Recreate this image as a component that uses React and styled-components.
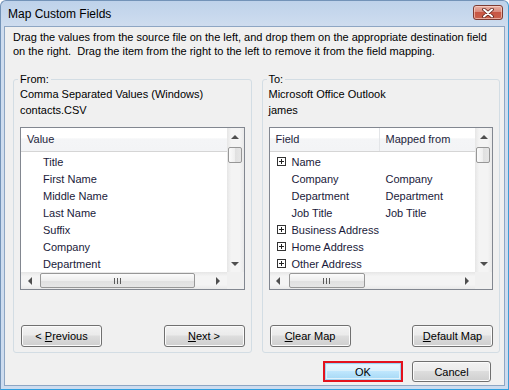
import React from 'react'
import styled, { createGlobalStyle } from 'styled-components'

const GlobalStyle = createGlobalStyle`
  html, body {
    margin: 0;
    padding: 0;
    background: #ffffff;
  }
  body {
    font-family: "Liberation Sans", Arial, sans-serif;
    font-size: 11px;
    color: #000;
  }
  * {
    box-sizing: border-box;
  }
`

const Window = styled.div`
  width: 509px;
  height: 390px;
  display: flex;
  flex-direction: column;
  background: linear-gradient(#bed2ea, #cfddef 26px, #cddcef);
  border: 1px solid #7393b8;
  border-right-color: #3f9bd4;
  border-bottom-color: #2f9fe0;
  border-radius: 6px 6px 0 0;
`

const TitleBar = styled.div`
  height: 25px;
  display: flex;
  align-items: flex-start;
  justify-content: space-between;
  padding: 0 5px 0 7px;
`

const Title = styled.div`
  font-size: 12px;
  line-height: 16px;
  padding-top: 5px;
  color: #000;
`

const CloseButton = styled.div`
  width: 30px;
  height: 15px;
  margin-top: 4px;
  border: 1px solid #7d3b33;
  border-radius: 3px;
  background: linear-gradient(#eab1a5, #d98a7c 45%, #c85644 50%, #c9614d);
  box-shadow: inset 0 0 0 1px rgba(255, 220, 210, 0.6);
  display: flex;
  align-items: center;
  justify-content: center;
`

const Client = styled.div`
  flex: 1;
  margin: 0 3px 3px;
  border: 1px solid #8ea6c3;
  background: #f0f0f0;
  padding: 3px 4px 3px 8px;
  display: flex;
  flex-direction: column;
`

const Instructions = styled.p`
  margin: 0;
  line-height: 14px;
  color: #000;
`

const Groups = styled.div`
  display: flex;
  gap: 10px;
  margin-top: 14px;
`

const Group = styled.fieldset`
  flex: 1;
  min-width: 0;
  margin: 0;
  padding: 0 6px 5px;
  border: 1px solid #d3dde4;
  border-radius: 3px;
`

const Legend = styled.legend`
  padding: 0 2px;
  margin-left: -2px;
  line-height: 14px;
  color: #000;
`

const InfoLine = styled.div`
  line-height: 16px;
  color: #000;
`

const ListBox = styled.div`
  margin-top: 9px;
  height: 163px;
  border: 1px solid #828790;
  background: #fff;
  display: grid;
  grid-template-columns: 1fr 17px;
  grid-template-rows: 1fr 17px;
`

const ListArea = styled.div`
  overflow: hidden;
  display: flex;
  flex-direction: column;
`

const Header = styled.div`
  height: 24px;
  flex: none;
  display: flex;
  background: linear-gradient(#ffffff, #ffffff 45%, #f4f5f7 46%, #f3f4f6);
  border-bottom: 1px solid #d5d5d5;
`

const HeaderCell = styled.div`
  width: ${p => p.$w || 'auto'};
  flex: ${p => (p.$w ? 'none' : '1')};
  padding-left: 6px;
  line-height: 23px;
  color: #1e1e3c;
  border-right: ${p => (p.$divider ? '1px solid #e3e5e8' : 'none')};
`

const Rows = styled.div`
  padding-top: 1px;
`

const Row = styled.div`
  height: 17px;
  display: flex;
  align-items: center;
  color: #1a1a3a;
`

const Cell = styled.div`
  width: ${p => p.$w || 'auto'};
  flex: ${p => (p.$w ? 'none' : '1')};
  padding-left: ${p => p.$pad || 0}px;
  display: flex;
  align-items: center;
  white-space: nowrap;
`

const Expander = styled.svg`
  width: 9px;
  height: 9px;
  margin-right: 6px;
  flex: none;
`

const VScroll = styled.div`
  grid-row: 1;
  grid-column: 2;
  display: flex;
  flex-direction: column;
  background: linear-gradient(90deg, #e6e6e6, #f4f4f4 25%, #f4f4f4 75%, #e9e9e9);
`

const HScroll = styled.div`
  grid-row: 2;
  grid-column: 1;
  display: flex;
  align-items: center;
  background: linear-gradient(#e6e6e6, #f4f4f4 25%, #f4f4f4 75%, #e9e9e9);
`

const Corner = styled.div`
  grid-row: 2;
  grid-column: 2;
  background: #f0f0f0;
`

const ArrowBox = styled.div`
  width: 17px;
  height: 17px;
  flex: none;
  display: flex;
  align-items: center;
  justify-content: center;
  margin-top: ${p => (p.$end ? 'auto' : '0')};
  margin-left: ${p => (p.$endX ? 'auto' : '0')};
`

const Triangle = styled.span`
  width: 0;
  height: 0;
  ${p =>
    p.$dir === 'up'
      ? 'border-left: 4px solid transparent; border-right: 4px solid transparent; border-bottom: 4px solid #4f4f4f;'
      : p.$dir === 'down'
      ? 'border-left: 4px solid transparent; border-right: 4px solid transparent; border-top: 4px solid #4f4f4f;'
      : p.$dir === 'left'
      ? 'border-top: 4px solid transparent; border-bottom: 4px solid transparent; border-right: 4px solid #4f4f4f;'
      : 'border-top: 4px solid transparent; border-bottom: 4px solid transparent; border-left: 4px solid #4f4f4f;'}
`

const VThumb = styled.div`
  height: 16px;
  margin: 2px 2px 0 1px;
  border: 1px solid #979797;
  border-radius: 2px;
  background: linear-gradient(90deg, #fbfbfb, #eeeeee 50%, #e0e0e0 51%, #e6e6e6);
`

const HThumb = styled.div`
  width: ${p => p.$w}px;
  height: 15px;
  margin-left: 2px;
  flex: none;
  border: 1px solid #979797;
  border-radius: 2px;
  background: linear-gradient(#fbfbfb, #eeeeee 50%, #e0e0e0 51%, #e6e6e6);
  display: flex;
  align-items: center;
  justify-content: center;
`

const ButtonRow = styled.div`
  margin-top: 35px;
  display: flex;
  justify-content: space-between;
  padding: 0 0 0 1px;
`

const Button = styled.button`
  width: ${p => p.$w || 81}px;
  height: ${p => p.$h || 22}px;
  padding: 0;
  font: inherit;
  font-size: 11px;
  color: #000;
  border: 1px solid #707070;
  border-radius: 3px;
  background: linear-gradient(#f2f2f2, #ebebeb 45%, #dddddd 50%, #cfcfcf);
  box-shadow: inset 0 0 0 1px #fbfbfb;
`

const Footer = styled.div`
  margin-top: 8px;
  display: flex;
  justify-content: flex-end;
  gap: 9px;
  padding-right: 9px;
`

const Highlight = styled.div`
  width: 80px;
  height: 21px;
  border: 2px solid #e3121d;
  display: flex;
`

const DefaultButton = styled.button`
  flex: 1;
  padding: 0;
  font: inherit;
  font-size: 11px;
  color: #000;
  border: 1px solid #9ed3f1;
  background: linear-gradient(#eaf6fd, #d9f0fc 45%, #bee6fd 50%, #a7d9f5);
  box-shadow: inset 0 0 0 1px #dff2fc;
`

const Grip = () => (
  <svg width="7" height="6" viewBox="0 0 7 6">
    <path d="M0.5 0v6M3.5 0v6M6.5 0v6" stroke="#5a5a5a" strokeWidth="1" />
  </svg>
)

const Plus = () => (
  <Expander viewBox="0 0 9 9">
    <rect x="0.5" y="0.5" width="8" height="8" fill="#fff" stroke="#333" />
    <path d="M2 4.5h5M4.5 2v5" stroke="#222" strokeWidth="1" />
  </Expander>
)

function Scrollbars({ thumb }) {
  return (
    <>
      <VScroll>
        <ArrowBox>
          <Triangle $dir="up" />
        </ArrowBox>
        <VThumb />
        <ArrowBox $end>
          <Triangle $dir="down" />
        </ArrowBox>
      </VScroll>
      <HScroll>
        <ArrowBox>
          <Triangle $dir="left" />
        </ArrowBox>
        <HThumb $w={thumb}>
          <Grip />
        </HThumb>
        <ArrowBox $endX>
          <Triangle $dir="right" />
        </ArrowBox>
      </HScroll>
      <Corner />
    </>
  )
}

const sourceFields = [
  'Title',
  'First Name',
  'Middle Name',
  'Last Name',
  'Suffix',
  'Company',
  'Department',
]

const targetFields = [
  { name: 'Name', group: true },
  { name: 'Company', from: 'Company' },
  { name: 'Department', from: 'Department' },
  { name: 'Job Title', from: 'Job Title' },
  { name: 'Business Address', group: true },
  { name: 'Home Address', group: true },
  { name: 'Other Address', group: true },
]

export default function App() {
  return (
    <>
      <GlobalStyle />
      <Window>
        <TitleBar>
          <Title>Map Custom Fields</Title>
          <CloseButton>
            <svg width="12" height="10" viewBox="0 0 12 10">
              <path d="M2 1.5l8 7M10 1.5l-8 7" stroke="#5b1e18" strokeWidth="3.6" strokeLinecap="round" />
              <path d="M2 1.5l8 7M10 1.5l-8 7" stroke="#ffffff" strokeWidth="2" strokeLinecap="round" />
            </svg>
          </CloseButton>
        </TitleBar>
        <Client>
          <Instructions>
            Drag the values from the source file on the left, and drop them on the appropriate destination field
            <br />
            on the right.&nbsp; Drag the item from the right to the left to remove it from the field mapping.
          </Instructions>
          <Groups>
            <Group>
              <Legend>From:</Legend>
              <InfoLine>Comma Separated Values (Windows)</InfoLine>
              <InfoLine>contacts.CSV</InfoLine>
              <ListBox>
                <ListArea>
                  <Header>
                    <HeaderCell>Value</HeaderCell>
                  </Header>
                  <Rows>
                    {sourceFields.map(f => (
                      <Row key={f}>
                        <Cell $pad={22}>{f}</Cell>
                      </Row>
                    ))}
                  </Rows>
                </ListArea>
                <Scrollbars thumb={155} />
              </ListBox>
              <ButtonRow>
                <Button>
                  &lt; <u>P</u>revious
                </Button>
                <Button>
                  <u>N</u>ext &gt;
                </Button>
              </ButtonRow>
            </Group>
            <Group>
              <Legend>To:</Legend>
              <InfoLine>Microsoft Office Outlook</InfoLine>
              <InfoLine>james</InfoLine>
              <ListBox>
                <ListArea>
                  <Header>
                    <HeaderCell $w="110px" $divider>
                      Field
                    </HeaderCell>
                    <HeaderCell>Mapped from</HeaderCell>
                  </Header>
                  <Rows>
                    {targetFields.map(f => (
                      <Row key={f.name}>
                        <Cell $w="110px" $pad={f.group ? 7 : 22}>
                          {f.group && <Plus />}
                          {f.name}
                        </Cell>
                        <Cell $pad={6}>{f.from}</Cell>
                      </Row>
                    ))}
                  </Rows>
                </ListArea>
                <Scrollbars thumb={76} />
              </ListBox>
              <ButtonRow>
                <Button>
                  <u>C</u>lear Map
                </Button>
                <Button>
                  <u>D</u>efault Map
                </Button>
              </ButtonRow>
            </Group>
          </Groups>
          <Footer>
            <Highlight>
              <DefaultButton>OK</DefaultButton>
            </Highlight>
            <Button $w={79} $h={21}>
              Cancel
            </Button>
          </Footer>
        </Client>
      </Window>
    </>
  )
}
